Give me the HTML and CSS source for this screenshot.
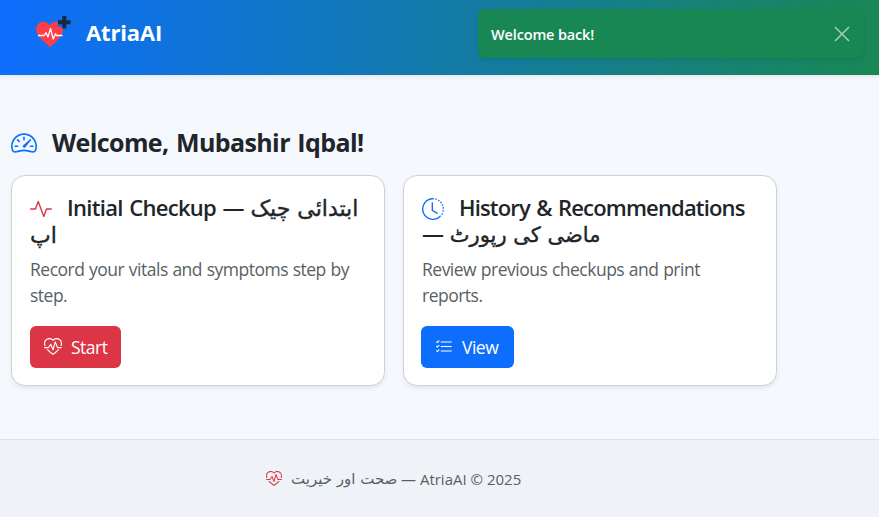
FILE: index.html
```html
<!DOCTYPE html>
<html lang="en">
<head>
<meta charset="utf-8">
<title>AtriaAI</title>
<link rel="stylesheet" href="styles.css">
</head>
<body>
<svg class="sprite" aria-hidden="true">
  <symbol id="heart-pulse" viewBox="0 0 16 16">
    <path d="m8 2.748-.717-.737C5.6.281 2.514.878 1.4 3.053.918 3.995.78 5.323 1.508 7H.43c-2.128-5.697 4.165-8.83 7.394-5.857q.09.083.176.171a3 3 0 0 1 .176-.17c3.23-2.974 9.522.159 7.394 5.856h-1.078c.728-1.677.59-3.005.108-3.947C13.486.878 10.4.28 8.717 2.01zM2.212 10h1.315C4.593 11.183 6.05 12.458 8 13.795c1.949-1.337 3.407-2.612 4.473-3.795h1.315c-1.265 1.566-3.14 3.25-5.788 5-2.648-1.75-4.523-3.434-5.788-5"/>
    <path d="M10.464 3.314a.5.5 0 0 0-.945.049L7.921 8.956 6.464 5.314a.5.5 0 0 0-.88-.091L3.732 8H.5a.5.5 0 0 0 0 1H4a.5.5 0 0 0 .416-.223l1.473-2.209 1.647 4.118a.5.5 0 0 0 .945-.049l1.598-5.593 1.457 3.642A.5.5 0 0 0 12 9h3.5a.5.5 0 0 0 0-1h-3.162z"/>
  </symbol>
</svg>

<header class="navbar">
  <svg class="logo" viewBox="0 0 36 32">
    <path fill="#ff3d47" d="M15 31.200C9 25.500 1.200 20.500 1.200 13.300C1.200 8.500 4.500 5.700 8.300 5.700c2.700 0 5 1.300 6.400 3.500C16.200 7 18.500 5.700 21 5.700c.6 0 1.200.1 1.700.2V11h5.100v.8c.1.500.2 1 .2 1.500C28 20.500 21 25.500 15 31.200z"/>
    <path fill="none" stroke="#fff" stroke-width="1.300" stroke-linejoin="round" d="M3 19.500h6.300l1.700-2.800 2 4.300 2.500-8.500 2.700 10.500 2.300-5.200 1 1.700H27.500"/>
    <path fill="#15283f" d="M27.300 0h4v4.300h4.300v4h-4.300v4.300h-4V8.300H23v-4h4.300z"/>
  </svg>
  <span class="brand">AtriaAI</span>
  <div class="toast">
    <span class="toast-text">Welcome back!</span>
    <svg class="close" viewBox="0 0 16 16"><path d="M1 1 15 15M15 1 1 15"/></svg>
  </div>
</header>

<main class="content">
  <h1 class="welcome">
    <svg class="icon blue" viewBox="0 0 16 16">
      <path d="M8 4a.5.5 0 0 1 .5.5V6a.5.5 0 0 1-1 0V4.500A.5.5 0 0 1 8 4zM3.732 5.732a.5.5 0 0 1 .707 0l.915.914a.5.5 0 1 1-.708.708l-.914-.915a.5.5 0 0 1 0-.707zM2 10a.5.5 0 0 1 .5-.5h1.586a.5.5 0 0 1 0 1H2.500A.5.5 0 0 1 2 10zm9.500 0a.5.5 0 0 1 .5-.5h1.500a.5.5 0 0 1 0 1H12a.5.5 0 0 1-.5-.5zm.754-4.246a.389.389 0 0 0-.527-.02L7.547 9.310a.91.91 0 1 0 1.302 1.258l3.434-4.297a.389.389 0 0 0-.029-.518z"/>
      <path fill-rule="evenodd" d="M0 10a8 8 0 1 1 15.547 2.661c-.442 1.253-1.845 1.602-2.932 1.250C11.309 13.488 9.475 13 8 13c-1.474 0-3.310.488-4.615.911-1.087.352-2.490.003-2.932-1.250A7.988 7.988 0 0 1 0 10zm8-7a7 7 0 0 0-6.603 9.329c.203.575.923.876 1.680.63C4.397 12.533 6.358 12 8 12s3.604.532 4.923.96c.757.245 1.477-.056 1.680-.631A7 7 0 0 0 8 3z"/>
    </svg>
    <span>Welcome, Mubashir Iqbal!</span>
  </h1>
  <div class="cards">
    <section class="card">
      <h2 class="card-title">
        <svg class="icon red" viewBox="0 0 16 16"><path d="M6 2a.5.5 0 0 1 .47.33L10 12.036l1.530-4.208A.5.5 0 0 1 12 7.500h3.500a.5.5 0 0 1 0 1h-3.150l-1.880 5.170a.5.5 0 0 1-.94 0L6 3.964 4.470 8.171A.5.5 0 0 1 4 8.500H.5a.5.5 0 0 1 0-1h3.150l1.880-5.170A.5.5 0 0 1 6 2Z"/></svg><span class="checkup">Initial Checkup — </span><span class="urdu" lang="ur">ابتدائی چیک<br>اپ</span>
      </h2>
      <p class="desc record">Record your vitals and symptoms step by<br>step.</p>
      <a class="btn start"><svg class="icon" viewBox="0 0 16 16"><use href="#heart-pulse"/></svg><span>Start</span></a>
    </section>
    <section class="card">
      <h2 class="card-title">
        <svg class="icon blue" viewBox="0 0 16 16">
          <path d="M8.515 1.019A7 7 0 0 0 8 1V0a8 8 0 0 1 .589.022zm2.004.45a7 7 0 0 0-.985-.299l.219-.976q.576.129 1.126.342zm1.370.71a7 7 0 0 0-.439-.27l.493-.87a8 8 0 0 1 .979.654l-.615.789a7 7 0 0 0-.418-.302zm1.834 1.790a7 7 0 0 0-.653-.796l.724-.69q.406.429.747.91zm.744 1.352a7 7 0 0 0-.214-.468l.893-.45a8 8 0 0 1 .45 1.088l-.95.313a7 7 0 0 0-.179-.483m.53 2.507a7 7 0 0 0-.1-1.025l.985-.17q.1.58.116 1.170zm-.131 1.538q.05-.254.081-.51l.993.123a8 8 0 0 1-.23 1.155l-.964-.267q.069-.247.12-.501m-.952 2.379q.276-.436.486-.908l.914.405q-.24.54-.555 1.038zm-.964 1.205q.183-.183.35-.378l.758.653a8 8 0 0 1-.401.432z"/>
          <path d="M8 1a7 7 0 1 0 4.950 11.950l.707.707A8.001 8.001 0 1 1 8 0z"/>
          <path d="M7.500 3a.5.5 0 0 1 .5.5v5.210l3.248 1.856a.5.5 0 0 1-.496.868l-3.500-2A.5.5 0 0 1 7 9V3.500a.5.5 0 0 1 .5-.5"/>
        </svg><span class="history">History &amp; Recommendations</span><br><span>— </span><span class="urdu report" lang="ur">ماضی کی رپورٹ</span>
      </h2>
      <p class="desc review">Review previous checkups and print<br>reports.</p>
      <a class="btn view"><svg class="icon" viewBox="0 0 16 16"><path d="M5 11.500a.5.5 0 0 1 .5-.5h9a.5.5 0 0 1 0 1h-9a.5.5 0 0 1-.5-.5m0-4a.5.5 0 0 1 .5-.5h9a.5.5 0 0 1 0 1h-9a.5.5 0 0 1-.5-.5m0-4a.5.5 0 0 1 .5-.5h9a.5.5 0 0 1 0 1h-9a.5.5 0 0 1-.5-.5M3.854 2.146a.5.5 0 0 1 0 .708l-1.500 1.500a.5.5 0 0 1-.708 0l-.5-.5a.5.5 0 1 1 .708-.708L2 3.293l1.146-1.147a.5.5 0 0 1 .708 0m0 4a.5.5 0 0 1 0 .708l-1.500 1.500a.5.5 0 0 1-.708 0l-.5-.5a.5.5 0 1 1 .708-.708L2 7.293l1.146-1.147a.5.5 0 0 1 .708 0m0 4a.5.5 0 0 1 0 .708l-1.500 1.500a.5.5 0 0 1-.708 0l-.5-.5a.5.5 0 0 1 .708-.708l.146.147 1.146-1.147a.5.5 0 0 1 .708 0"/></svg><span>View</span></a>
    </section>
  </div>
</main>

<footer class="footer">
  <svg class="icon red" viewBox="0 0 16 16"><use href="#heart-pulse"/></svg>
  <span class="urdu" lang="ur">صحت اور خیریت</span>
  <span class="copyright">— AtriaAI © 2025</span>
</footer>
</body>
</html>
```
FILE: styles.css
```css
* { box-sizing: border-box; }

body {
  margin: 0;
  height: 517px;
  display: flex;
  flex-direction: column;
  overflow: hidden;
  background: #f5f9fd;
  color: #212529;
  font-family: "Open Sans", "Noto Sans", "DejaVu Sans", sans-serif;
}

h1, h2, p { margin: 0; }
.sprite { position: absolute; width: 0; height: 0; }
.icon { fill: currentColor; flex: none; }
.blue { color: #0d6efd; }
.red { color: #dc3545; }
.urdu { font-family: "DejaVu Sans", sans-serif; letter-spacing: 0; word-spacing: 0; }

.navbar {
  position: relative;
  flex: none;
  height: 75px;
  padding: 16px 0 0 35px;
  display: flex;
  align-items: flex-start;
  background: linear-gradient(90deg, #0d6efd, #198754);
  box-shadow: 0 2px 4px rgba(0, 0, 0, .075);
}
.logo { width: 36px; height: 32px; }
.brand {
  margin-left: 15px;
  color: #fff;
  font-size: 22px;
  font-weight: 700;
  line-height: 33px;
  letter-spacing: -.15px;
}
.toast {
  position: absolute;
  left: 478px;
  top: 9px;
  width: 385px;
  height: 49px;
  padding: 0 13px;
  display: flex;
  align-items: center;
  justify-content: space-between;
  border-radius: 6px;
  background: #198754;
  box-shadow: 0 2px 4px rgba(0, 0, 0, .075);
  color: #fff;
}
.toast-text { padding-top: 1px; font-size: 14.500px; font-weight: 600; letter-spacing: -.15px; }
.close { width: 16px; height: 16px; fill: none; stroke: rgba(255, 255, 255, .6); stroke-width: 1.500; }

.content { flex: none; height: 364px; padding: 50px 0 0 11px; }
.welcome {
  height: 36px;
  display: flex;
  align-items: center;
  gap: 15px;
  font-size: 25px;
  font-weight: 700;
  line-height: 34px;
  letter-spacing: -.6px;
  word-spacing: 1.500px;
  white-space: nowrap;
}
.welcome span { padding-bottom: 2px; }
.welcome .icon { width: 26px; height: 26px; }

.cards { margin-top: 14px; display: grid; grid-template-columns: 374px 374px; gap: 18px; }
.card {
  height: 211px;
  padding: 18px;
  border: 1px solid #cfd2d5;
  border-radius: 14px;
  background: #fff;
  box-shadow: 0 2px 4px rgba(0, 0, 0, .075);
}
.card-title {
  height: 53px;
  font-size: 22px;
  font-weight: 600;
  line-height: 26px;
  letter-spacing: -.7px;
  word-spacing: 1.500px;
  white-space: nowrap;
}
.card-title .icon { width: 22px; height: 22px; margin-right: 15px; vertical-align: -4px; }
.card-title .urdu { font-size: 22px; font-weight: 400; line-height: 25px; -webkit-text-stroke: .4px; }
.card-title .report { font-size: 21px; }
.history { letter-spacing: -.84px; }
.desc {
  margin-top: 9px;
  color: #595f64;
  font-size: 17.500px;
  line-height: 26px;
  letter-spacing: -.5px;
  word-spacing: .6px;
  white-space: nowrap;
}
.btn {
  height: 42px;
  margin-top: 18px;
  padding: 0 14px;
  display: inline-flex;
  align-items: center;
  border-radius: 6px;
  color: #fff;
  font-size: 17.500px;
  letter-spacing: -.5px;
}
.btn .icon { width: 18px; height: 18px; margin-right: 9px; }
.start { width: 91px; background: #dc3545; }
.view { width: 93px; margin-left: -1px; background: #0d6efd; }

.footer {
  flex: 1;
  padding-left: 266px;
  display: flex;
  align-items: center;
  border-top: 1px solid #dbe1e5;
  background: #eff3f8;
  color: #595f64;
  font-size: 15px;
  white-space: nowrap;
}
.footer .icon { width: 16px; height: 16px; margin-right: 9px; }
.footer .urdu { width: 110px; }
```
